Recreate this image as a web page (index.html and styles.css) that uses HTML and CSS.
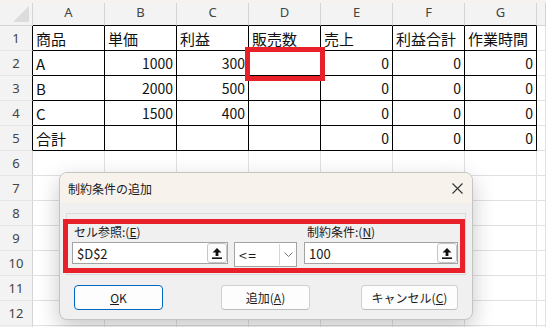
FILE: index.html
```html
<!DOCTYPE html>
<html lang="ja">
<head>
  <meta charset="UTF-8">
  <title>制約条件の追加</title>
  <link rel="stylesheet" href="styles.css">
</head>
<body>
  <div class="sheet">
    <div class="strip"></div>

    <!-- Worksheet grid -->
    <div class="grid">
      <div class="corner"><span></span></div>
      <div class="ch t">A</div><div class="ch t">B</div><div class="ch t">C</div><div class="ch t">D</div>
      <div class="ch t">E</div><div class="ch t">F</div><div class="ch t">G</div><div class="ch"></div>

      <div class="rh t">1</div>
      <div class="d">商品</div><div class="d">単価</div><div class="d">利益</div><div class="d">販売数</div>
      <div class="d">売上</div><div class="d">利益合計</div><div class="d">作業時間</div><div class="c"></div>

      <div class="rh t">2</div>
      <div class="d">A</div><div class="d n">1000</div><div class="d n">300</div><div class="d"></div>
      <div class="d n">0</div><div class="d n">0</div><div class="d n">0</div><div class="c"></div>

      <div class="rh t">3</div>
      <div class="d">B</div><div class="d n">2000</div><div class="d n">500</div><div class="d"></div>
      <div class="d n">0</div><div class="d n">0</div><div class="d n">0</div><div class="c"></div>

      <div class="rh t">4</div>
      <div class="d">C</div><div class="d n">1500</div><div class="d n">400</div><div class="d"></div>
      <div class="d n">0</div><div class="d n">0</div><div class="d n">0</div><div class="c"></div>

      <div class="rh t">5</div>
      <div class="d">合計</div><div class="d"></div><div class="d"></div><div class="d"></div>
      <div class="d n">0</div><div class="d n">0</div><div class="d n">0</div><div class="c"></div>

      <div class="rh">6</div><div class="c"></div><div class="c"></div><div class="c"></div><div class="c"></div><div class="c"></div><div class="c"></div><div class="c"></div><div class="c"></div>
      <div class="rh">7</div><div class="c"></div><div class="c"></div><div class="c"></div><div class="c"></div><div class="c"></div><div class="c"></div><div class="c"></div><div class="c"></div>
      <div class="rh">8</div><div class="c"></div><div class="c"></div><div class="c"></div><div class="c"></div><div class="c"></div><div class="c"></div><div class="c"></div><div class="c"></div>
      <div class="rh">9</div><div class="c"></div><div class="c"></div><div class="c"></div><div class="c"></div><div class="c"></div><div class="c"></div><div class="c"></div><div class="c"></div>
      <div class="rh">10</div><div class="c"></div><div class="c"></div><div class="c"></div><div class="c"></div><div class="c"></div><div class="c"></div><div class="c"></div><div class="c"></div>
      <div class="rh">11</div><div class="c"></div><div class="c"></div><div class="c"></div><div class="c"></div><div class="c"></div><div class="c"></div><div class="c"></div><div class="c"></div>
      <div class="rh">12</div><div class="c"></div><div class="c"></div><div class="c"></div><div class="c"></div><div class="c"></div><div class="c"></div><div class="c"></div><div class="c"></div>
      <div class="rh"></div><div class="c"></div><div class="c"></div><div class="c"></div><div class="c"></div><div class="c"></div><div class="c"></div><div class="c"></div><div class="c"></div>
    </div>

    <!-- Red highlight on D2 -->
    <div class="mark"></div>

    <!-- Add constraint dialog -->
    <div class="dialog">
      <div class="titlebar">
        <span>制約条件の追加</span>
        <svg class="close" width="11" height="11" viewBox="0 0 11 11">
          <path d="M0.5 0.5 L10.5 10.5 M10.5 0.5 L0.5 10.5" stroke="#333" stroke-width="1.1" fill="none"/>
        </svg>
      </div>
      <div class="dialog-body">
        <div class="group">
          <div class="fields">
            <div class="field ref">
              <label>セル参照:(<u>E</u>)</label>
              <div class="input">
                <span>$D$2</span>
                <button class="pick">
                  <svg width="10" height="11" viewBox="0 0 10 11"><path d="M5 0 L9.5 4.6 H6.4 V8 H3.6 V4.6 H0.5 Z" fill="#111"/><rect x="0" y="9.4" width="10" height="1.6" fill="#111"/></svg>
                </button>
              </div>
            </div>
            <div class="combo">
              <span>&lt;=</span>
              <div class="drop">
                <svg width="9" height="5" viewBox="0 0 9 5"><path d="M0.5 0.5 L4.5 4.5 L8.5 0.5" stroke="#777" stroke-width="1" fill="none"/></svg>
              </div>
            </div>
            <div class="field cond">
              <label>制約条件:(<u>N</u>)</label>
              <div class="input">
                <span>100</span>
                <button class="pick">
                  <svg width="10" height="11" viewBox="0 0 10 11"><path d="M5 0 L9.5 4.6 H6.4 V8 H3.6 V4.6 H0.5 Z" fill="#111"/><rect x="0" y="9.4" width="10" height="1.6" fill="#111"/></svg>
                </button>
              </div>
            </div>
          </div>
        </div>
        <div class="actions">
          <button class="btn primary"><u>O</u>K</button>
          <button class="btn add">追加(<u>A</u>)</button>
          <button class="btn cancel">キャンセル(<u>C</u>)</button>
        </div>
      </div>
    </div>
  </div>
</body>
</html>
```

FILE: styles.css
```css
:root {
  --grid-line: #e1e1e1;
  --head-bg: #f3f3f3;
  --head-line: #d4d4d4;
  --red: #e8202a;
  --text: #111;
}

body {
  margin: 0;
  background: #fff;
  font-family: "Noto Sans CJK JP", sans-serif;
  color: var(--text);
  overflow: hidden;
}

.sheet {
  position: relative;
  width: 546px;
  height: 327px;
  overflow: hidden;
}

.strip {
  height: 3px;
  background: #f6f3ef;
}

/* Worksheet */
.grid {
  display: grid;
  grid-template-columns: 33px repeat(7, 72px) 1fr;
  grid-template-rows: 23px;
  grid-auto-rows: 25px;
}

.grid > div {
  box-sizing: border-box;
  display: flex;
  align-items: center;
  overflow: hidden;
  white-space: nowrap;
  border-right: 1px solid var(--grid-line);
  border-bottom: 1px solid var(--grid-line);
  font-size: 15px;
}

.grid > .corner {
  background: var(--head-bg);
  border-color: var(--head-line);
  justify-content: flex-end;
  align-items: flex-end;
  padding: 0 3px 3px 0;
}

.corner span {
  width: 16px;
  height: 16px;
  background: #dcdcdc;
  clip-path: polygon(100% 0, 100% 100%, 0 100%);
}

.grid > .ch {
  background: var(--head-bg);
  border-right-color: var(--head-line);
  border-bottom-color: var(--head-line);
  justify-content: center;
  padding-bottom: 5px;
  font-family: "Noto Sans", sans-serif;
  font-size: 13px;
  color: #444;
}

.grid > .rh {
  background: var(--head-bg);
  border-right-color: var(--head-line);
  border-bottom-color: #e6e6e6;
  justify-content: center;
  font-family: "Noto Sans", sans-serif;
  font-size: 13px;
  color: #444;
}

.grid > .ch.t {
  border-bottom-color: #000;
}

.grid > .rh.t {
  border-right-color: #000;
}

.grid > .d {
  border-right-color: #000;
  border-bottom-color: #000;
  padding-left: 3px;
}

.grid > .n {
  justify-content: flex-end;
  padding: 0 3px 0 0;
  font-size: 14px;
}

.mark {
  position: absolute;
  left: 245px;
  top: 47px;
  width: 80px;
  height: 34px;
  box-sizing: border-box;
  border: 5px solid var(--red);
}

/* Dialog */
.dialog {
  position: absolute;
  left: 59px;
  top: 172px;
  width: 414px;
  height: 148px;
  box-sizing: border-box;
  border: 1px solid #c4c4c4;
  border-radius: 8px;
  background: #f0f0f0;
  overflow: hidden;
  box-shadow: 0 8px 22px rgba(0, 0, 0, 0.22);
  font-size: 12px;
  color: #1a1a1a;
}

.titlebar {
  height: 30px;
  display: flex;
  align-items: center;
  justify-content: space-between;
  padding: 0 8px 0 8px;
  background: #f8f2ed;
}

.close {
  margin-right: 1px;
}

.dialog-body {
  padding: 10px 6px 0 6px;
}

.group {
  box-sizing: border-box;
  height: 62px;
  border: 1px solid #dadada;
}

.fields {
  box-sizing: border-box;
  width: 402px;
  height: 54px;
  margin: 5px 0 0 -4px;
  border: 5px solid var(--red);
  display: flex;
  align-items: flex-start;
  padding-left: 4px;
}

.field {
  display: flex;
  flex-direction: column;
}

.field label {
  height: 18px;
  line-height: 16px;
  padding-left: 2px;
}

.field.ref {
  width: 156px;
}

.field.cond {
  width: 154px;
  margin-left: 7px;
}

.field.cond label {
  padding-left: 3px;
}

.input {
  box-sizing: border-box;
  height: 22px;
  display: flex;
  align-items: center;
  justify-content: space-between;
  background: #fff;
  border: 1px solid #a3a3a3;
  padding-left: 4px;
  font-size: 13px;
}

.pick {
  box-sizing: border-box;
  width: 20px;
  height: 20px;
  padding: 0;
  display: flex;
  align-items: center;
  justify-content: center;
  background: #fbfbfb;
  border: 1px solid #c6c6c6;
  border-radius: 3px;
}

.combo {
  box-sizing: border-box;
  width: 63px;
  height: 25px;
  margin: 18px 0 0 6px;
  display: flex;
  align-items: center;
  justify-content: space-between;
  background: #fff;
  border: 1px solid #a3a3a3;
  padding-left: 4px;
  font-size: 14px;
  letter-spacing: 1.5px;
}

.drop {
  box-sizing: border-box;
  width: 17px;
  height: 21px;
  border-left: 1px solid #d6d6d6;
  display: flex;
  align-items: center;
  justify-content: center;
}

.actions {
  display: flex;
  margin-top: 10px;
  padding: 0 8px;
}

.btn {
  box-sizing: border-box;
  height: 25px;
  padding: 0;
  background: #fdfdfd;
  border: 1px solid #d0d0d0;
  border-bottom-color: #bdbdbd;
  border-radius: 4px;
  font-family: "Noto Sans CJK JP", sans-serif;
  font-size: 12px;
  color: #1a1a1a;
}

.btn.primary {
  width: 89px;
  border: 1px solid #0067c0;
}

.btn.add {
  width: 89px;
  margin-left: 58px;
}

.btn.cancel {
  width: 97px;
  margin-left: auto;
}
```
